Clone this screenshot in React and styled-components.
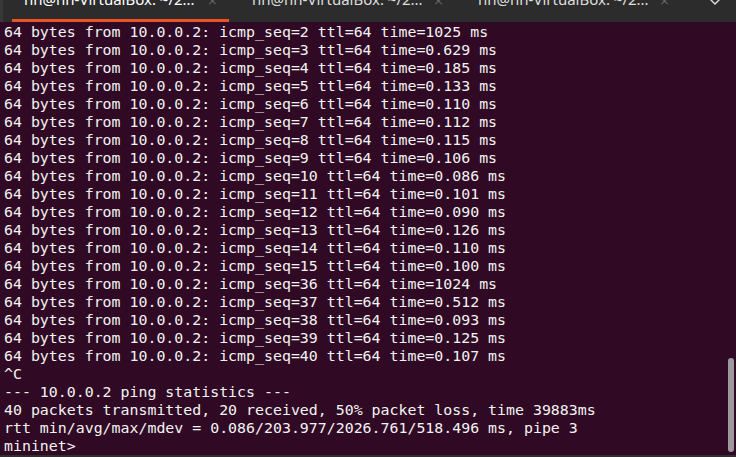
import React from 'react'
import styled, { createGlobalStyle } from 'styled-components'

const Global = createGlobalStyle`
  html, body { margin: 0; padding: 0; background: #2c2c2c; }
  #root { width: 736px; height: 457px; overflow: hidden; }
`

const Window = styled.div`
  width: 736px;
  height: 457px;
  display: flex;
  flex-direction: column;
  background: #2c2c2c;
  overflow: hidden;
`

const TabBar = styled.div`
  height: 22px;
  flex: none;
  display: flex;
  align-items: stretch;
  border-left: 3px solid #383838;
  background: #2c2c2c;
  position: relative;
  overflow: hidden;
`

const Tab = styled.div`
  width: 226px;
  flex: none;
  position: relative;
  display: flex;
  align-items: flex-start;
  padding-left: ${({ active }) => (active ? '21px' : '23px')};
  box-sizing: border-box;
  &::after {
    content: '';
    display: ${({ active }) => (active ? 'block' : 'none')};
    position: absolute;
    left: 9px;
    right: 0;
    bottom: 0;
    height: 3px;
    background: #e95420;
  }
`

const TabTitle = styled.span`
  font-family: 'Noto Sans', 'Open Sans', sans-serif;
  font-size: 15px;
  line-height: 15px;
  margin-top: -8px;
  color: ${({ active }) => (active ? '#ffffff' : '#dedede')};
  white-space: nowrap;
`

const Close = styled.span`
  position: absolute;
  left: 204px;
  top: -7px;
  font-family: 'DejaVu Sans', sans-serif;
  font-size: 13px;
  color: #666666;
`

const Chevron = styled.svg`
  position: absolute;
  right: 14px;
  top: -3px;
`

const Terminal = styled.div`
  flex: 1;
  position: relative;
  background: #300a24;
  padding: 1px 0 0 4px;
  font-family: 'DejaVu Sans Mono', monospace;
  font-size: 14.9px;
  line-height: 18px;
  color: #f3f3f3;
  white-space: pre;
  overflow: hidden;
`

const Line = styled.div`
  height: 18px;
`

const Thumb = styled.div`
  position: absolute;
  right: 2px;
  bottom: 3px;
  width: 6px;
  height: 94px;
  border-radius: 3px;
  background: #9c9a9c;
`

const BottomEdge = styled.div`
  height: 2px;
  flex: none;
  background: #2f2f2f;
`

const pings = [
  [2, '1025'], [3, '0.629'], [4, '0.185'], [5, '0.133'], [6, '0.110'],
  [7, '0.112'], [8, '0.115'], [9, '0.106'], [10, '0.086'], [11, '0.101'],
  [12, '0.090'], [13, '0.126'], [14, '0.110'], [15, '0.100'], [36, '1024'],
  [37, '0.512'], [38, '0.093'], [39, '0.125'], [40, '0.107'],
]

const tail = [
  '^C',
  '--- 10.0.0.2 ping statistics ---',
  '40 packets transmitted, 20 received, 50% packet loss, time 39883ms',
  'rtt min/avg/max/mdev = 0.086/203.977/2026.761/518.496 ms, pipe 3',
  'mininet>',
]

const title = 'hh@hh-VirtualBox: ~/2...'

export default function App() {
  const lines = [
    ...pings.map(([seq, t]) => `64 bytes from 10.0.0.2: icmp_seq=${seq} ttl=64 time=${t} ms`),
    ...tail,
  ]
  return (
    <Window>
      <Global />
      <TabBar>
        {[true, false, false].map((active, i) => (
          <Tab key={i} active={active}>
            <TabTitle active={active}>{title}</TabTitle>
            <Close>×</Close>
          </Tab>
        ))}
        <Chevron width="14" height="9" viewBox="0 0 14 9">
          <path d="M1 1 L7 7 L13 1" fill="none" stroke="#e0e0e0" strokeWidth="1.4" />
        </Chevron>
      </TabBar>
      <Terminal>
        {lines.map((l, i) => (
          <Line key={i}>{l}</Line>
        ))}
        <Thumb />
      </Terminal>
      <BottomEdge />
    </Window>
  )
}
